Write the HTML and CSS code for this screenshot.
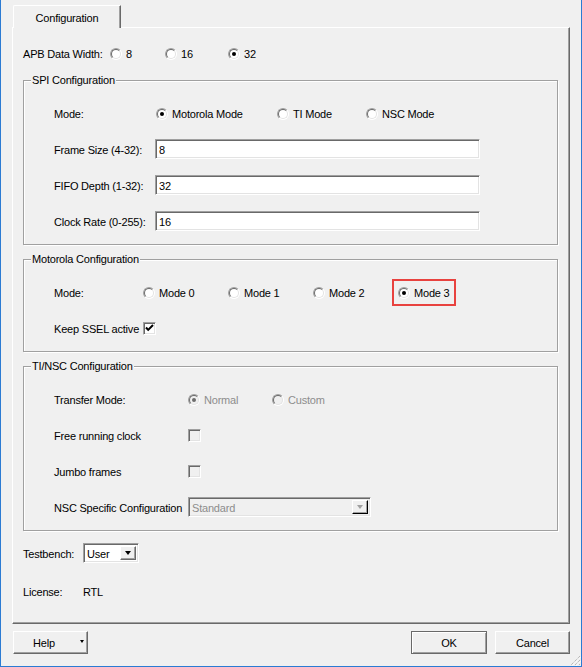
FILE: index.html
```html
<!DOCTYPE html>
<html>
<head>
<meta charset="utf-8">
<title>Configuration</title>
<link rel="stylesheet" href="styles.css">
</head>
<body>
<div class="window">
  <div class="tabs"><div class="tab">Configuration</div></div>
  <div class="panel">
    <div class="apb">
      <span class="lbl">APB Data Width:</span>
      <span class="opt"><i class="radio"></i>8</span>
      <span class="opt"><i class="radio"></i>16</span>
      <span class="opt"><i class="radio on"></i>32</span>
    </div>

    <div class="group">
      <div class="legend">SPI Configuration</div>
      <div class="rows">
        <div class="row spi-mode">
          <span class="lbl">Mode:</span>
          <span class="opt"><i class="radio on"></i>Motorola Mode</span>
          <span class="opt"><i class="radio"></i>TI Mode</span>
          <span class="opt"><i class="radio"></i>NSC Mode</span>
        </div>
        <div class="row field-row"><span class="lbl">Frame Size (4-32):</span><div class="field">8</div></div>
        <div class="row field-row"><span class="lbl">FIFO Depth (1-32):</span><div class="field">32</div></div>
        <div class="row field-row"><span class="lbl">Clock Rate (0-255):</span><div class="field">16</div></div>
      </div>
    </div>

    <div class="group">
      <div class="legend">Motorola Configuration</div>
      <div class="rows">
        <div class="row moto-mode">
          <span class="lbl">Mode:</span>
          <span class="opt"><i class="radio"></i>Mode 0</span>
          <span class="opt"><i class="radio"></i>Mode 1</span>
          <span class="opt"><i class="radio"></i>Mode 2</span>
          <span class="opt highlight"><i class="radio on"></i>Mode 3</span>
        </div>
        <div class="row moto-keep">
          <span class="lbl">Keep SSEL active</span>
          <span class="check on"><svg viewBox="0 0 13 13" width="13" height="13"><path d="M3 5.5 L5.2 7.9 L10 3" fill="none" stroke="#000" stroke-width="2"/></svg></span>
        </div>
      </div>
    </div>

    <div class="group">
      <div class="legend">TI/NSC Configuration</div>
      <div class="rows">
        <div class="row ti-row">
          <span class="lbl">Transfer Mode:</span>
          <span class="opt disabled"><i class="radio on"></i>Normal</span>
          <span class="opt disabled"><i class="radio"></i>Custom</span>
        </div>
        <div class="row ti-row">
          <span class="lbl">Free running clock</span>
          <span class="check off"></span>
        </div>
        <div class="row ti-row">
          <span class="lbl">Jumbo frames</span>
          <span class="check off"></span>
        </div>
        <div class="row ti-row">
          <span class="lbl">NSC Specific Configuration</span>
          <div class="combo nsc"><span class="combo-text">Standard</span><span class="combo-btn"><i class="arrow"></i></span></div>
        </div>
      </div>
    </div>

    <div class="row bottom-row testbench">
      <span class="lbl">Testbench:</span>
      <div class="combo tb"><span class="combo-text">User</span><span class="combo-btn"><i class="arrow"></i></span></div>
    </div>
    <div class="row bottom-row license">
      <span class="lbl">License:</span>
      <span class="lbl">RTL</span>
    </div>
  </div>

  <div class="buttons">
    <div class="btn help"><span>Help</span><i class="arrow small"></i></div>
    <div class="btn ok default">OK</div>
    <div class="btn cancel">Cancel</div>
  </div>

  <svg class="grip" viewBox="0 0 12 12" width="12" height="12">
    <path d="M11 2 L2 11 M11 6 L6 11 M11 10 L10 11" stroke="#a0a0a0" stroke-width="1" stroke-dasharray="1 1" fill="none"/>
    <path d="M12 3 L3 12 M12 7 L7 12" stroke="#ffffff" stroke-width="1" stroke-dasharray="1 1" fill="none"/>
  </svg>
</div>
</body>
</html>
```

FILE: styles.css
```css
html, body {
  margin: 0;
  padding: 0;
  background: #f0f0f0;
}

body {
  font-family: "Liberation Sans", Arial, sans-serif;
  font-size: 11px;
  line-height: 13px;
  letter-spacing: -0.2px;
  color: #000;
}

.window {
  position: relative;
  width: 582px;
  height: 667px;
  box-sizing: border-box;
  border-left: 1px solid #2b7bd3;
  border-right: 1px solid #2b7bd3;
  border-bottom: 1px solid #2b7bd3;
  display: flex;
  flex-direction: column;
  background: #f0f0f0;
}

/* tab strip */
.tabs {
  padding: 5px 0 0 12px;
  display: flex;
}

.tab {
  position: relative;
  z-index: 1;
  width: 108px;
  height: 23px;
  box-sizing: border-box;
  margin-bottom: -1px;
  padding-top: 2px;
  display: flex;
  align-items: center;
  justify-content: center;
  background: #f0f0f0;
  border-top: 1px solid #fff;
  border-left: 1px solid #fff;
  border-right: 1px solid #696969;
  border-top-left-radius: 2px;
  box-shadow: inset -1px 0 0 #a0a0a0;
}

/* main panel */
.panel {
  margin-left: 11px;
  width: 558px;
  height: 597px;
  box-sizing: border-box;
  border-top: 1px solid #fff;
  border-left: 1px solid #fff;
  border-right: 1px solid #696969;
  border-bottom: 1px solid #696969;
  box-shadow: inset -1px -1px 0 #a0a0a0;
  padding: 0 11px 0 10px;
  display: flex;
  flex-direction: column;
}

.apb {
  height: 50px;
  display: grid;
  grid-template-columns: 87px 55px 63px auto;
  align-items: center;
  margin-bottom: 2px;
}

.lbl,
.opt {
  padding-top: 2px;
}

/* group boxes */
.group {
  width: 535px;
  box-sizing: border-box;
  border: 1px solid #a0a0a0;
  box-shadow: 1px 1px 0 #fff, inset 1px 1px 0 #fff;
}

.group + .group {
  margin-top: 14px;
}

.legend {
  width: fit-content;
  margin: -7px 0 -6px 7px;
  padding: 0 1px;
  height: 13px;
  background: #f0f0f0;
  position: relative;
}

.rows {
  display: flex;
  flex-direction: column;
  gap: 16px;
  padding: 22px 0 13px 30px;
}

.group:first-of-type .rows {
  padding-bottom: 14px;
}

.row {
  height: 20px;
  display: grid;
  align-items: center;
}

.spi-mode {
  grid-template-columns: 102px 121px 89px auto;
}

.field-row {
  grid-template-columns: 101px 325px;
}

.moto-mode {
  grid-template-columns: 89px 85px 85px 85px auto;
}

.moto-keep {
  grid-template-columns: 89px auto;
}

.ti-row {
  grid-template-columns: 134px 84px auto;
}

.testbench {
  grid-template-columns: 60px auto;
  margin-top: 12px;
}

.license {
  grid-template-columns: 60px auto;
  margin-top: 18px;
}

/* option (radio + label) */
.opt {
  display: inline-flex;
  align-items: center;
  gap: 4px;
  white-space: nowrap;
  justify-self: start;
}

.opt.disabled {
  color: #8d8d8d;
}

.highlight {
  outline: 2px solid #e8423f;
  outline-offset: 4px;
  padding-bottom: 0;
}

.radio {
  position: relative;
  display: inline-block;
  width: 12px;
  height: 12px;
  box-sizing: border-box;
  border-radius: 50%;
  border: 1px solid;
  border-color: #a0a0a0 #fff #fff #a0a0a0;
  background: #fff;
  flex: none;
  margin-top: -1px;
}

.radio::before {
  content: "";
  position: absolute;
  inset: 0;
  border-radius: 50%;
  box-sizing: border-box;
  border: 1px solid;
  border-color: #696969 #e3e3e3 #e3e3e3 #696969;
}

.radio.on::after {
  content: "";
  position: absolute;
  left: 3px;
  top: 3px;
  width: 4px;
  height: 4px;
  border-radius: 50%;
  background: #000;
}

.disabled .radio {
  background: #f0f0f0;
}

.disabled .radio.on::after {
  background: #6d6d6d;
}

/* checkbox */
.check {
  display: inline-block;
  width: 13px;
  height: 13px;
  box-sizing: border-box;
  border: 1px solid;
  border-color: #a0a0a0 #fff #fff #a0a0a0;
  box-shadow: inset 1px 1px 0 #696969, inset -1px -1px 0 #e3e3e3;
  background: #fff;
  position: relative;
  justify-self: start;
}

.check svg {
  position: absolute;
  left: -1px;
  top: -1px;
}

.check.off {
  background: #f0f0f0;
}

/* text field */
.field {
  height: 20px;
  box-sizing: border-box;
  border: 1px solid;
  border-color: #a0a0a0 #fff #fff #a0a0a0;
  box-shadow: inset 1px 1px 0 #696969, inset -1px -1px 0 #e3e3e3;
  background: #fff;
  padding: 2px 3px 0;
  display: flex;
  align-items: center;
}

/* combo box */
.combo {
  height: 20px;
  box-sizing: border-box;
  border: 1px solid;
  border-color: #a0a0a0 #fff #fff #a0a0a0;
  box-shadow: inset 1px 1px 0 #696969, inset -1px -1px 0 #e3e3e3;
  background: #fff;
  padding: 2px;
  display: flex;
  align-items: stretch;
  justify-self: start;
}

.combo.nsc {
  width: 183px;
  background: #f0f0f0;
  color: #8d8d8d;
}

.combo.tb {
  width: 56px;
}

.combo-text {
  flex: 1;
  display: flex;
  align-items: center;
  padding: 2px 0 0 1px;
}

.combo-btn {
  width: 16px;
  box-sizing: border-box;
  border: 1px solid;
  border-color: #fff #696969 #696969 #fff;
  box-shadow: inset -1px -1px 0 #a0a0a0;
  background: #f0f0f0;
  display: flex;
  align-items: center;
  justify-content: center;
}

.nsc .combo-btn {
  border-color: #fff #000 #000 #fff;
}

.arrow {
  display: block;
  width: 0;
  height: 0;
  border-left: 3.5px solid transparent;
  border-right: 3.5px solid transparent;
  border-top: 4px solid #000;
}

.nsc .arrow {
  border-top-color: #a0a0a0;
}

.arrow.small {
  border-left-width: 2.5px;
  border-right-width: 2.5px;
  border-top-width: 3px;
}

/* dialog buttons */
.buttons {
  margin-top: 7px;
  padding: 0 11px 0 12px;
  display: flex;
  gap: 8px;
}

.btn {
  width: 75px;
  height: 23px;
  box-sizing: border-box;
  border: 1px solid;
  border-color: #fff #696969 #696969 #fff;
  box-shadow: inset -1px -1px 0 #a0a0a0;
  display: flex;
  align-items: center;
  justify-content: center;
  padding-top: 1px;
  background: #f0f0f0;
}

.btn.help {
  justify-content: flex-start;
  padding: 1px 3px 0 19px;
}

.btn.help .arrow {
  margin-left: auto;
  margin-top: -3px;
}

.btn.ok {
  margin-left: auto;
  width: 76px;
}

.btn.default {
  border: 1px solid #696969;
  box-shadow: inset 1px 1px 0 #fff, inset -1px -1px 0 #a0a0a0;
}

.grip {
  position: absolute;
  right: 0;
  bottom: 0;
}
```
